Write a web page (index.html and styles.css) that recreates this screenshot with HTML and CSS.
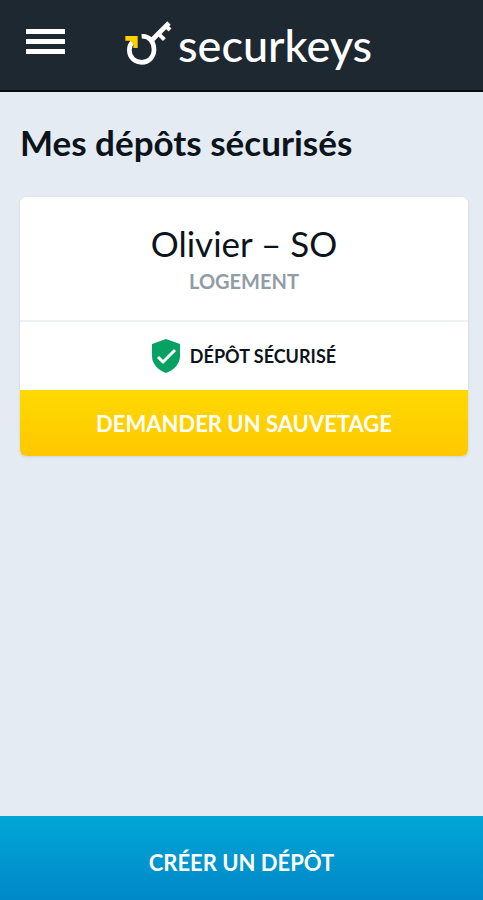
FILE: index.html
```
<!DOCTYPE html>
<html lang="fr">
<head>
  <meta charset="UTF-8" />
  <meta name="viewport" content="width=device-width, initial-scale=1.0"/>
  <title>Mes dépôts sécurisés - securkeys</title>
  <link rel="stylesheet" href="styles.css">
</head>

<body>
  <header>
    <button type="button" class="menu-btn" aria-label="Menu">
      <span></span>
      <span></span>
      <span></span>
    </button>
    <a href="#" class="logo">
      <svg viewBox="44 26 144 138" aria-hidden="true">
        <g fill="none" stroke="#fff" stroke-width="14">
          <path d="M94 75 C118 73 131 93 131 114 C131 138 115 153 94 153 C73 153 57 138 57 116 C57 106 60 98 68 90" />
          <path d="M119 92 L176 35" />
          <path d="M167 44 L179 56" stroke-width="12" />
          <path d="M144 67 L162 85" stroke-width="12" />
        </g>
        <path d="M45 74 H82 V110 H69 V99 L58 88 H45 Z" fill="#ffd000" />
      </svg>
      <span>securkeys</span>
    </a>
  </header>

  <main>
    <h1>Mes dépôts sécurisés</h1>

    <article class="card">
      <div class="card-header">
        <h2>Olivier – SO</h2>
        <p>LOGEMENT</p>
      </div>
      <div class="status">
        <svg viewBox="0 0 28 34" aria-hidden="true">
          <path d="M14 0 L28 5 V17 C28 25 22 31 14 34 C6 31 0 25 0 17 V5 Z" fill="#07a163" />
          <path d="M6 18 L11 23 L23 11" fill="none" stroke="#fff" stroke-width="3" />
        </svg>
        <span>DÉPÔT SÉCURISÉ</span>
      </div>
      <button type="button" class="rescue-btn">DEMANDER UN SAUVETAGE</button>
    </article>
  </main>

  <button type="button" class="create-btn">CRÉER UN DÉPÔT</button>
</body>
</html>
```
FILE: styles.css
```
* { box-sizing:border-box; }
body { margin:0; min-height:100vh; display:flex; flex-direction:column; font-family:Lato,sans-serif; background:#e5ebf3; color:#0c141b; }
h1, h2, p { margin:0; }
button { border:none; font-family:inherit; color:white; cursor:pointer; }

header { display:flex; align-items:center; height:92px; padding:0 26px; background:#1e2831; border-bottom:2px solid #080d12; }
.menu-btn { display:flex; flex-direction:column; gap:5px; padding:0; margin-bottom:8px; background:none; }
.menu-btn span { width:39px; height:5px; background:white; }
.logo { display:flex; align-items:center; gap:5px; margin-left:60px; color:white; text-decoration:none; font-size:45px; line-height:50px; font-weight:500; }
.logo svg { width:48px; height:46px; margin-bottom:4px; }

main { flex:1; padding:30px 15px 32px 20px; }
h1 { font-size:35px; line-height:40px; font-weight:700; margin-bottom:35px; }
.card { background:white; border-radius:6px; overflow:hidden; box-shadow:0 1px 3px rgba(0,0,0,0.1); text-align:center; }
.card-header { padding:24px 16px; border-bottom:2px solid #eef1f4; }
h2 { font-size:35px; line-height:45px; font-weight:400; }
.card-header p { font-size:20px; line-height:30px; font-weight:700; color:#929ca5; }
.status { display:flex; align-items:center; justify-content:center; gap:10px; height:68px; font-size:18px; font-weight:700; }
.status svg { width:28px; height:34px; }
.rescue-btn { display:block; width:100%; height:66px; font-size:22px; font-weight:700; background:linear-gradient(#ffd900, #ffc800); }
.create-btn { height:84px; padding:8px 0 0; font-size:22px; font-weight:700; background:linear-gradient(#02a6d6, #0088c8); }
```
